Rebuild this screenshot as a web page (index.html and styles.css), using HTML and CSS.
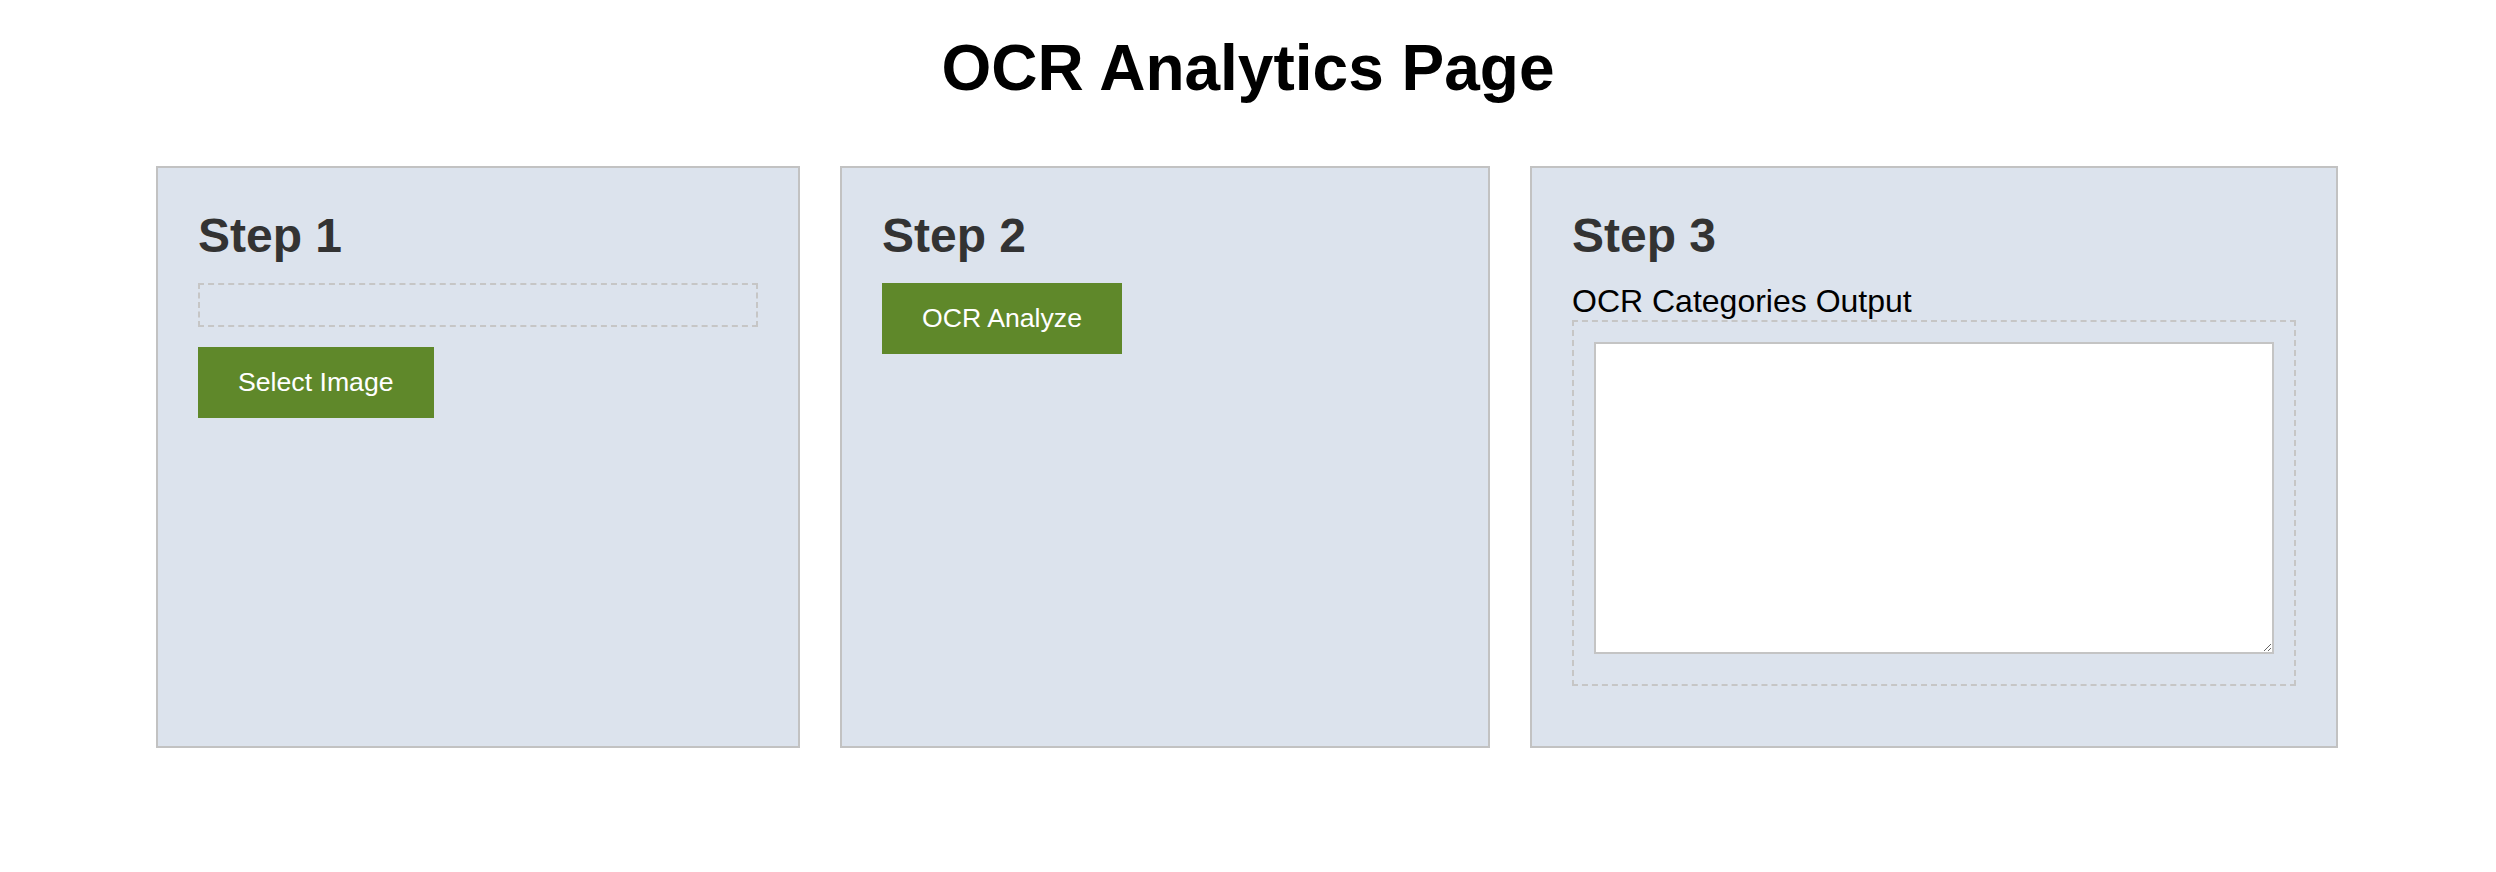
FILE: index.html
```html
<!DOCTYPE html>
<html lang="en">
<head>
<meta charset="utf-8">
<title>OCR Analytics Page</title>
<link rel="stylesheet" href="styles.css">
</head>
<body>
<div class="page">
  <h1 class="title">OCR Analytics Page</h1>
  <div class="steps">
    <section class="step">
      <h2 class="step-title">Step 1</h2>
      <div class="drop-zone"></div>
      <button class="btn">Select Image</button>
    </section>
    <section class="step">
      <h2 class="step-title">Step 2</h2>
      <button class="btn">OCR Analyze</button>
    </section>
    <section class="step">
      <h2 class="step-title">Step 3</h2>
      <label class="out-label" for="out">OCR Categories Output</label>
      <div class="out-box">
        <textarea id="out" class="out-area"></textarea>
      </div>
    </section>
  </div>
</div>
</body>
</html>
```

FILE: styles.css
```css
html, body {
  margin: 0;
  padding: 0;
  background: #ffffff;
}

body {
  font-family: "Liberation Sans", Arial, Helvetica, sans-serif;
  font-size: 32px;
  color: #000;
}

.page {
  padding-top: 31px;
}

.title {
  margin: 0 0 61px;
  font-size: 64px;
  line-height: 74px;
  font-weight: bold;
  text-align: center;
  color: #000;
}

.steps {
  display: grid;
  grid-template-columns: 644px 650px 808px;
  column-gap: 40px;
  padding: 0 156px;
}

.step {
  box-sizing: border-box;
  min-height: 582px;
  padding: 40px 40px 40px;
  background: #dce3ed;
  border: 2px solid #c2c2c2;
}

.step-title {
  margin: 0 0 19px;
  font-size: 48px;
  line-height: 56px;
  font-weight: bold;
  color: #333333;
}

.drop-zone {
  height: 40px;
  border: 2px dashed #c6c6c6;
  margin-bottom: 20px;
}

.btn {
  display: inline-block;
  margin: 0;
  padding: 20px 40px;
  border: none;
  border-radius: 0;
  background: #5f882a;
  color: #ffffff;
  font-family: "Liberation Sans", Arial, Helvetica, sans-serif;
  font-size: 26.67px;
  line-height: 31px;
  cursor: pointer;
}

.out-label {
  display: block;
  font-size: 32px;
  line-height: 37px;
  color: #000;
}

.out-box {
  border: 2px dashed #c6c6c6;
  padding: 20px 20px 30px;
}

.out-area {
  display: block;
  box-sizing: border-box;
  width: 100%;
  height: 312px;
  margin: 0;
  border: 2px solid #c4c4c4;
  background: #ffffff;
  font-family: "Liberation Mono", monospace;
  font-size: 26px;
}
```
